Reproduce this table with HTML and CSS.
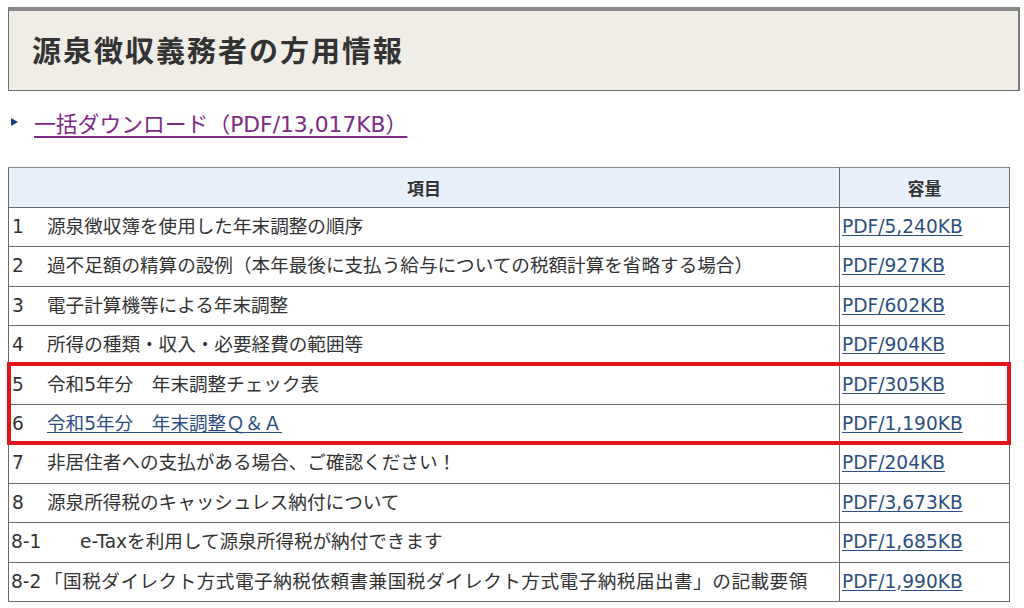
FILE: index.html
```html
<!DOCTYPE html>
<html lang="ja">
<head>
<meta charset="utf-8">
<title>源泉徴収義務者の方用情報</title>
<link rel="stylesheet" href="styles.css">
</head>
<body>
<div class="page">
  <div class="title-box">
    <h1 class="title">源泉徴収義務者の方用情報</h1>
  </div>
  <p class="download">
    <span class="tri"></span>
    <a class="dl-link" href="#">一括ダウンロード（PDF/13,017KB）</a>
  </p>
  <div class="table-wrap">
    <table class="list">
      <thead>
        <tr><th class="c-item">項目</th><th class="c-size">容量</th></tr>
      </thead>
      <tbody>
        <tr><td><span class="no">1</span>源泉徴収簿を使用した年末調整の順序</td><td class="sz"><a href="#">PDF/5,240KB</a></td></tr>
        <tr><td><span class="no">2</span>過不足額の精算の設例（本年最後に支払う給与についての税額計算を省略する場合）</td><td class="sz"><a href="#">PDF/927KB</a></td></tr>
        <tr><td><span class="no">3</span>電子計算機等による年末調整</td><td class="sz"><a href="#">PDF/602KB</a></td></tr>
        <tr><td><span class="no">4</span>所得の種類・収入・必要経費の範囲等</td><td class="sz"><a href="#">PDF/904KB</a></td></tr>
        <tr><td><span class="no">5</span>令和5年分　年末調整チェック表</td><td class="sz"><a href="#">PDF/305KB</a></td></tr>
        <tr><td><span class="no">6</span><a href="#">令和5年分　年末調整Ｑ＆Ａ</a></td><td class="sz"><a href="#">PDF/1,190KB</a></td></tr>
        <tr><td><span class="no">7</span>非居住者への支払がある場合、ご確認ください！</td><td class="sz"><a href="#">PDF/204KB</a></td></tr>
        <tr><td><span class="no">8</span>源泉所得税のキャッシュレス納付について</td><td class="sz"><a href="#">PDF/3,673KB</a></td></tr>
        <tr><td><span class="no no-sub">8-1</span>e-Taxを利用して源泉所得税が納付できます</td><td class="sz"><a href="#">PDF/1,685KB</a></td></tr>
        <tr><td><span class="no no-sub2">8-2</span><span class="wide">「国税ダイレクト方式電子納税依頼書兼国税ダイレクト方式電子納税届出書」の記載要領</span></td><td class="sz"><a href="#">PDF/1,990KB</a></td></tr>
      </tbody>
    </table>
    <div class="highlight"></div>
  </div>
</div>
</body>
</html>
```

FILE: styles.css
```css
html, body {
  margin: 0;
  padding: 0;
  background: #ffffff;
}

body {
  font-family: "DejaVu Sans", "Noto Sans CJK JP", sans-serif;
  color: #333333;
}

.page {
  padding: 7px 4px 0 8px;
}

.title-box {
  background: #f0ece6;
  border-top: 4px solid #8a8a8a;
  border-left: 1px solid #6e6e6e;
  border-right: 2px solid #7a7a7a;
  border-bottom: 1px solid #6e6e6e;
  height: 76px;
  display: flex;
  align-items: center;
  padding-left: 23px;
  padding-bottom: 3px;
  box-sizing: content-box;
}

.title {
  margin: 0;
  font-family: "Noto Sans CJK JP", sans-serif;
  font-size: 29px;
  font-weight: bold;
  letter-spacing: 2px;
  color: #333333;
  line-height: 1;
}

.download {
  margin: 11px 0 0 0;
  display: flex;
  align-items: center;
  height: 40px;
}

.tri {
  width: 0;
  height: 0;
  border-top: 4px solid transparent;
  border-bottom: 4px solid transparent;
  border-left: 7px solid #1e3f73;
  margin: 0 16px 0 3px;
}

.dl-link {
  font-size: 21.8px;
  color: #7d2a86;
  text-decoration: underline;
  text-decoration-thickness: 2px;
  text-underline-offset: 4px;
}

.table-wrap {
  position: relative;
  margin-top: 25px;
  width: 1002px;
}

.list {
  width: 1002px;
  border-collapse: collapse;
  font-size: 18.6px;
  table-layout: fixed;
}

.list th {
  background: #e8f0fb;
  font-family: "Noto Sans CJK JP", sans-serif;
  font-weight: bold;
  text-align: center;
  height: 39px;
  padding: 0;
  border: 1px solid #6a6a6a;
  border-top-color: #8a8a8a;
  color: #333333;
  font-size: 17px;
}

.c-item { width: auto; }
.c-size { width: 169px; }

.list td {
  border: 1px solid #6a6a6a;
  height: 38.4px;
  padding: 0 0 0 2px;
  white-space: nowrap;
  line-height: 1.2;
  vertical-align: middle;
}

.list td.sz {
  padding-left: 2px;
}

.list a {
  color: #2b4f82;
  text-decoration: underline;
  text-underline-offset: 2px;
}

.no {
  display: inline-block;
  width: 35px;
  padding-left: 1px;
}

.no-sub {
  width: 69px;
  padding-left: 0;
}

.no-sub2 {
  width: 33px;
  padding-left: 0;
}

.wide {
  letter-spacing: 0.5px;
}

.highlight {
  position: absolute;
  left: -1px;
  top: 195px;
  width: 996px;
  height: 75px;
  border: 4px solid #e0141a;
  pointer-events: none;
}
```
